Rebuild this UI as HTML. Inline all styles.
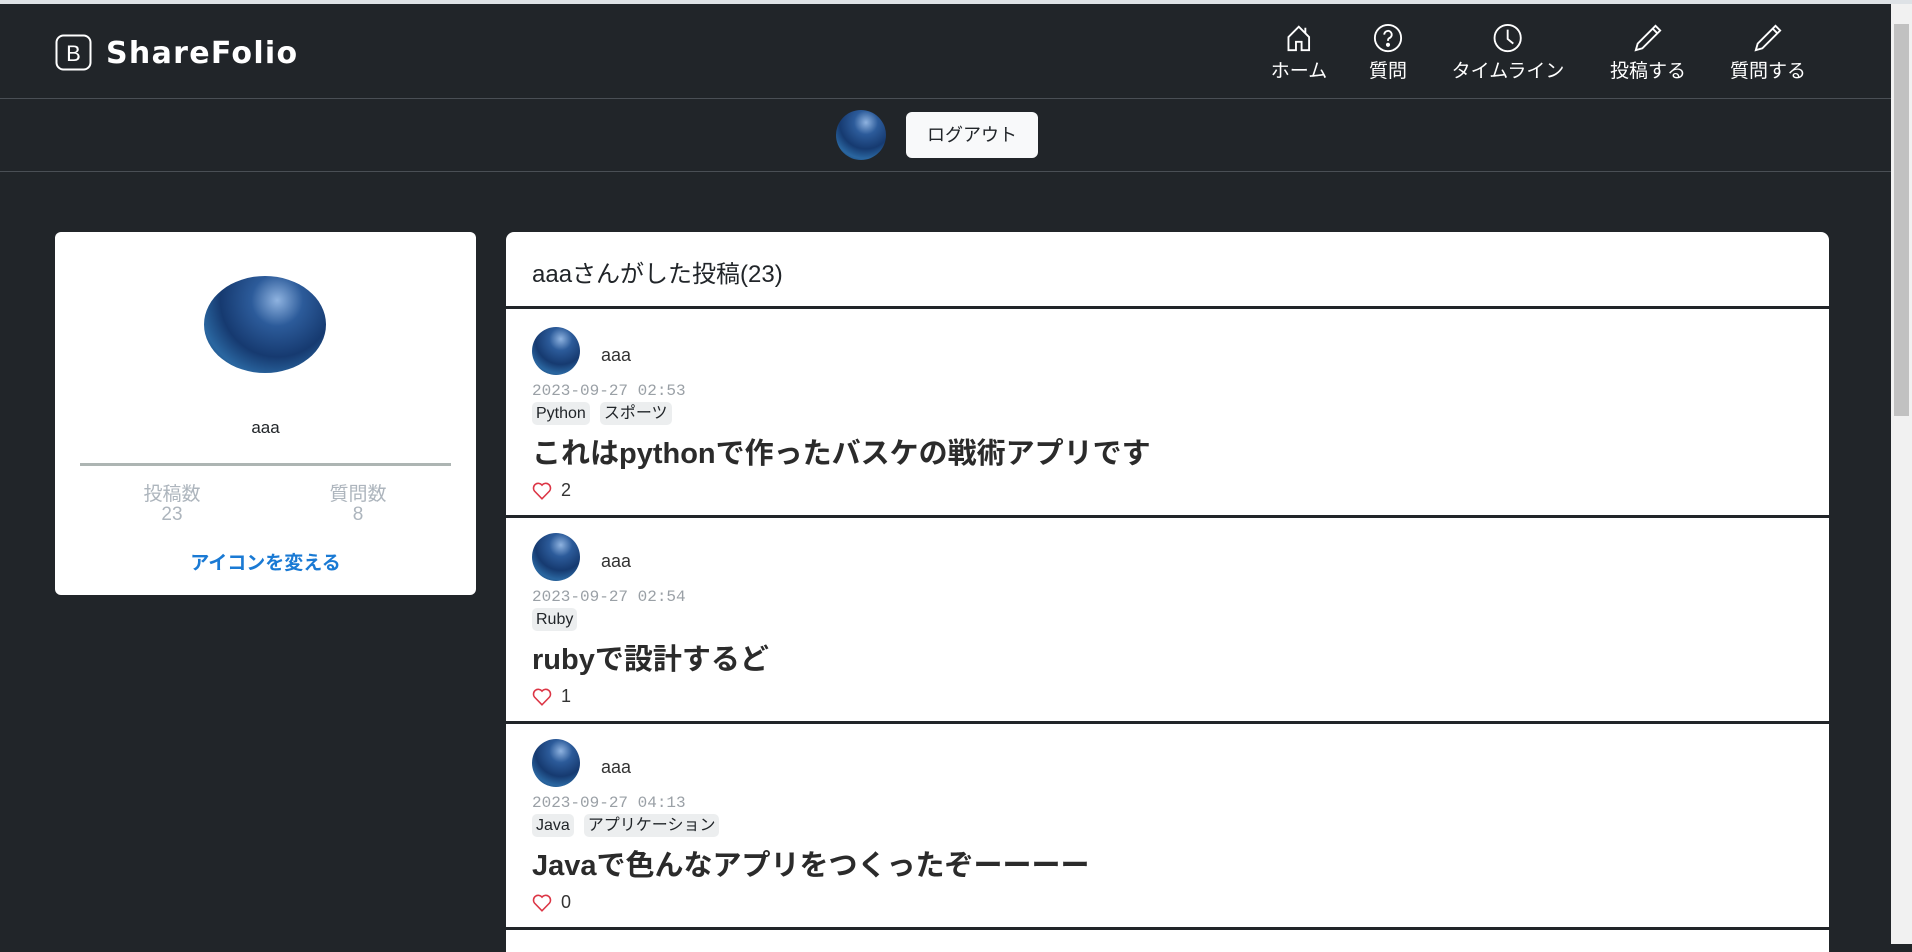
<!DOCTYPE html>
<html><head><meta charset="utf-8"><style>
*{box-sizing:border-box;margin:0;padding:0}
body{width:1912px;height:944px;overflow:hidden;background:#212529;font-family:"Liberation Sans","Noto Sans CJK JP",sans-serif;position:relative}
.abs{position:absolute}
.topline{left:0;top:0;width:1912px;height:4px;background:#dee2e6}
.scroll{left:1891px;top:4px;width:21px;height:940px;background:#f1f1f1}
.thumb{left:1894px;top:24px;width:15px;height:392px;background:#c1c1c1}
.nav{left:0;top:4px;width:1891px;height:95px;border-bottom:1px solid #4a4f55}
.bar2{left:0;top:99px;width:1891px;height:73px;border-bottom:1px solid #4a4f55}
.logo{left:106px;top:36px;color:#fff;font-weight:900;font-size:30px;letter-spacing:1.3px;font-family:"DejaVu Sans","Liberation Sans",sans-serif}
.ni{top:23px;color:#fff;font-size:19px;text-align:center;transform:translateX(-50%)}
.ni svg{display:block;margin:0 auto 3px}
.av{border-radius:50%;background:radial-gradient(circle at 60% 25%,#8fb3e0 0,#2c5b9a 25%,#163a70 55%,#2a66a0 75%,#123a66 100%)}
.btn{left:906px;top:112px;width:132px;height:46px;background:#f8f9fa;border-radius:6px;font-size:18px;text-align:center;line-height:46px;color:#212529}
.card1{left:55px;top:232px;width:421px;height:363px;background:#fff;border-radius:6px}
.card2{left:506px;top:232px;width:1323px;height:720px;background:#fff;border-radius:8px 8px 0 0}
.hdr{left:0;top:0;width:1323px;height:77px;border-bottom:3px solid #212529;font-size:24px;color:#212529;padding:22px 0 0 26px}
.item{left:0;width:1323px;height:206px;border-bottom:3px solid #212529}
.item .av{position:absolute;left:26px;top:15px;width:48px;height:48px}
.item .nm{position:absolute;left:95px;top:33px;font-size:18px;color:#333}
.item .dt{position:absolute;left:26px;top:70px;font-size:16px;color:#9aa0a6;font-family:"Liberation Mono",monospace}
.item .tags{position:absolute;left:26px;top:90px;display:flex;gap:10px}
.tag{background:#eceeef;border-radius:5px;font-size:16px;padding:1px 4px;color:#212529;height:23px;line-height:21px}
.item .tt{position:absolute;left:26px;top:118px;font-size:29px;font-weight:bold;color:#2b2b2b}
.item .lk{position:absolute;left:26px;top:168px;font-size:18px;color:#333;display:flex;align-items:center;gap:9px}
</style></head><body>
<div class="abs topline"></div>
<div class="abs nav"></div>
<div class="abs bar2"></div>
<div class="abs scroll"></div><div class="abs thumb"></div>
<svg class="abs" style="left:55px;top:34px" width="37" height="37" viewBox="0 0 37 37"><rect x="1.5" y="1.5" width="34" height="34" rx="7" fill="none" stroke="#fff" stroke-width="2"/><text x="18.5" y="27" text-anchor="middle" fill="#fff" font-size="22" font-family="Liberation Sans">B</text></svg>
<div class="abs logo">ShareFolio</div>

<div class="abs ni" style="left:1299px"><svg width="30" height="30" viewBox="0 0 16 16" fill="none" stroke="#fff" stroke-width="1"><path d="M2.5 7.5 8 2l5.5 5.5V14.5H9.5V10h-3v4.5h-4z"/><path d="M11.5 2.5v3"/></svg>ホーム</div>
<div class="abs ni" style="left:1388px"><svg width="30" height="30" viewBox="0 0 16 16" fill="none" stroke="#fff" stroke-width="1"><circle cx="8" cy="8" r="7"/><path d="M6 6.2a2 2 0 1 1 2.6 1.9C8.1 8.3 8 8.7 8 9.5"/><circle cx="8" cy="11.6" r=".6" fill="#fff"/></svg>質問</div>
<div class="abs ni" style="left:1508px"><svg width="30" height="30" viewBox="0 0 16 16" fill="none" stroke="#fff" stroke-width="1"><circle cx="8" cy="8" r="7"/><path d="M8 3.5V8.5l3 2.5"/></svg>タイムライン</div>
<div class="abs ni" style="left:1648px"><svg width="30" height="30" viewBox="0 0 16 16" fill="none" stroke="#fff" stroke-width="1"><path d="M12 1.5 14.5 4 5 13.5l-3.5 1 1-3.5z M10.5 3l2.5 2.5"/></svg>投稿する</div>
<div class="abs ni" style="left:1768px"><svg width="30" height="30" viewBox="0 0 16 16" fill="none" stroke="#fff" stroke-width="1"><path d="M12 1.5 14.5 4 5 13.5l-3.5 1 1-3.5z M10.5 3l2.5 2.5"/></svg>質問する</div>

<div class="abs av" style="left:836px;top:110px;width:50px;height:50px"></div>
<div class="abs btn">ログアウト</div>

<div class="abs card1">
 <div class="abs av" style="left:149px;top:44px;width:122px;height:97px"></div>
 <div class="abs" style="left:0;width:421px;top:186px;text-align:center;font-size:17px;color:#212529">aaa</div>
 <div class="abs" style="left:25px;top:231px;width:371px;height:3px;background:#adb5b3"></div>
 <div class="abs" style="left:67px;width:100px;top:253px;text-align:center;font-size:19px;color:#adb5bd;line-height:20px">投稿数<br>23</div>
 <div class="abs" style="left:253px;width:100px;top:253px;text-align:center;font-size:19px;color:#adb5bd;line-height:20px">質問数<br>8</div>
 <div class="abs" style="left:0;width:421px;top:316px;text-align:center;font-size:19px;font-weight:bold;color:#1a7ad4">アイコンを変える</div>
</div>

<div class="abs card2">
 <div class="abs hdr">aaaさんがした投稿(23)</div>
 <div class="abs item" style="top:80px">
  <div class="av"></div><div class="nm">aaa</div><div class="dt">2023-09-27 02:53</div>
  <div class="tags"><span class="tag">Python</span><span class="tag">スポーツ</span></div>
  <div class="tt">これはpythonで作ったバスケの戦術アプリです</div>
  <div class="lk"><svg width="20" height="18" viewBox="0 0 16 15"><path d="M8 14 1.8 7.6A3.6 3.6 0 0 1 8 2.6a3.6 3.6 0 0 1 6.2 5z" fill="none" stroke="#dc3545" stroke-width="1.3"/></svg>2</div>
 </div>
 <div class="abs item" style="top:286px">
  <div class="av"></div><div class="nm">aaa</div><div class="dt">2023-09-27 02:54</div>
  <div class="tags"><span class="tag">Ruby</span></div>
  <div class="tt">rubyで設計するど</div>
  <div class="lk"><svg width="20" height="18" viewBox="0 0 16 15"><path d="M8 14 1.8 7.6A3.6 3.6 0 0 1 8 2.6a3.6 3.6 0 0 1 6.2 5z" fill="none" stroke="#dc3545" stroke-width="1.3"/></svg>1</div>
 </div>
 <div class="abs item" style="top:492px">
  <div class="av"></div><div class="nm">aaa</div><div class="dt">2023-09-27 04:13</div>
  <div class="tags"><span class="tag">Java</span><span class="tag">アプリケーション</span></div>
  <div class="tt">Javaで色んなアプリをつくったぞーーーー</div>
  <div class="lk"><svg width="20" height="18" viewBox="0 0 16 15"><path d="M8 14 1.8 7.6A3.6 3.6 0 0 1 8 2.6a3.6 3.6 0 0 1 6.2 5z" fill="none" stroke="#dc3545" stroke-width="1.3"/></svg>0</div>
 </div>
</div>
</body></html>
